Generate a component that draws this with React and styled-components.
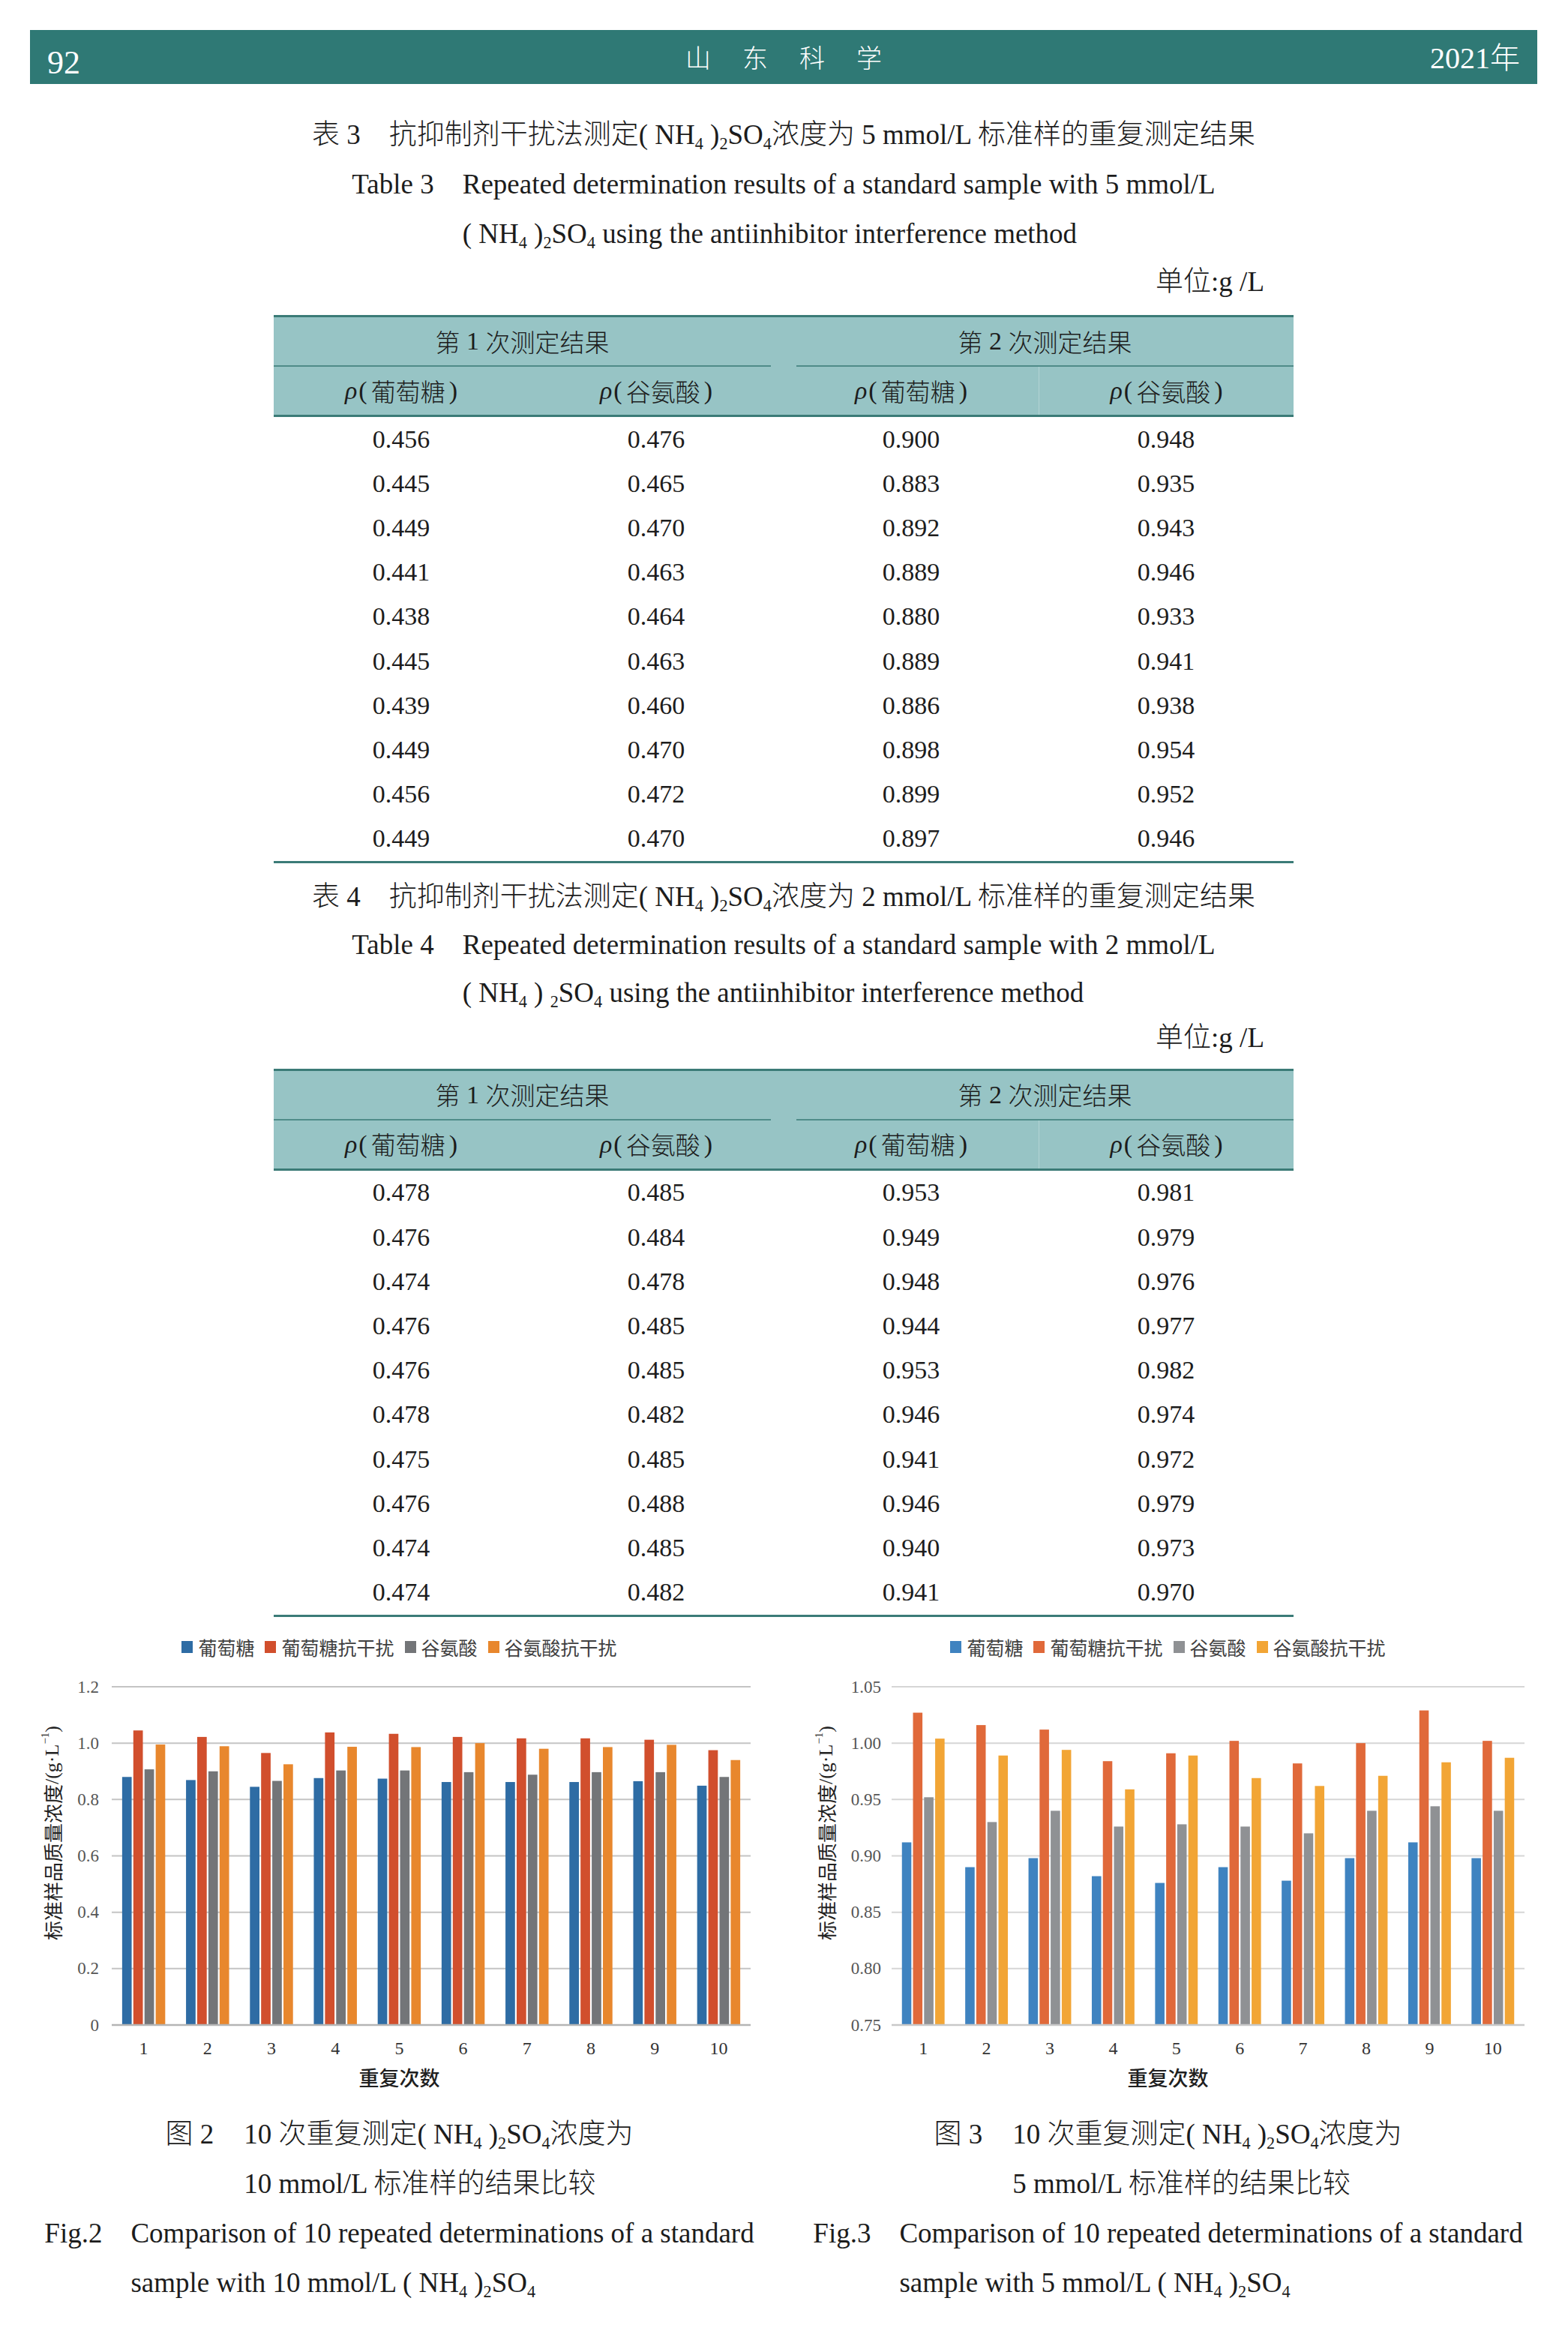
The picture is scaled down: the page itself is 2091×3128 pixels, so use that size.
import React from "react";
import styled, { createGlobalStyle } from "styled-components";

const SERIF = `"Liberation Serif", "Times New Roman", "Noto Sans CJK SC", serif`;
const CJK = `"Noto Sans CJK SC", "Noto Sans CJK TC", sans-serif`;

const GlobalStyle = createGlobalStyle`
  html, body { margin: 0; padding: 0; background: #ffffff; }
  body { font-family: ${SERIF}; color: #1c1c1c; }
  * { box-sizing: border-box; }
`;

const Page = styled.main`
  width: 2091px;
  min-height: 3128px;
  padding: 40px 41px 0 40px;
  overflow: hidden;
  background: #ffffff;
`;

/* ---------- running head ---------- */
const TopBar = styled.header`
  height: 72px;
  background: #2f7975;
  color: #ffffff;
  display: grid;
  grid-template-columns: 1fr auto 1fr;
  align-items: center;
  padding: 0 23px;
`;
const PageNo = styled.span`
  justify-self: start;
  font-size: 44px;
  line-height: 1;
  padding-top: 16px;
`;
const Masthead = styled.span`
  display: flex;
  gap: 42px;
  font-family: ${CJK};
  font-weight: 300;
  font-size: 34px;
  line-height: 1;
`;
const Year = styled.span`
  justify-self: end;
  font-size: 40px;
  line-height: 1;
`;

/* ---------- inline typography ---------- */
const Zh = styled.span`
  font-family: ${CJK};
  font-weight: 300;
  font-size: ${(p) => p.$size || "1em"};
  line-height: 1;
`;
const Sub = styled.sub`
  font-size: 0.6em;
  vertical-align: -0.32em;
  line-height: 0;
`;
const Rho = styled.i`
  font-style: italic;
  font-family: ${SERIF};
`;
const Paren = styled.span`
  margin: ${(p) => (p.$open ? "0 5px 0 2px" : "0 0 0 5px")};
`;

/* ---------- titles & captions ---------- */
const TitleBlock = styled.div`
  margin-top: ${(p) => p.$mt}px;
  font-size: 37px;
  line-height: ${(p) => p.$lh}px;
  white-space: nowrap;
`;
const CenterLine = styled.div`
  text-align: center;
`;
const Hanging = styled.div`
  display: flex;
  justify-content: center;
  margin-top: ${(p) => p.$mt || 0}px;
  font-size: 37px;
  line-height: ${(p) => p.$lh || 66}px;
  white-space: nowrap;
`;
const HangLabel = styled.span`
  margin-right: ${(p) => p.$gap}px;
`;
const HangBody = styled.div`
  display: flex;
  flex-direction: column;
`;
const Gap = styled.span`
  display: inline-block;
  width: ${(p) => p.$w || 38}px;
`;
const Unit = styled.div`
  width: 1360px;
  margin: 0 auto;
  text-align: right;
  padding-right: 39px;
  font-size: 37px;
  line-height: ${(p) => p.$lh}px;
`;

/* ---------- tables ---------- */
const TableWrap = styled.section`
  width: 1360px;
  margin: 13px auto 0;
  border-top: 3px solid #3b7b77;
  border-bottom: 3px solid #3b7b77;
`;
const Head = styled.div`
  display: grid;
  grid-template-columns: repeat(4, 1fr);
  background: #97c4c5;
  border-bottom: 3px solid #3b7b77;
`;
const GroupCell = styled.div`
  grid-column: span 2;
  height: 66px;
  display: flex;
  align-items: center;
  justify-content: center;
  border-bottom: 2px solid #4f8c89;
  margin: ${(p) => (p.$side === "left" ? "0 17px 0 0" : "0 0 0 17px")};
  font-size: 34px;
`;
const ColHead = styled.div`
  height: 64px;
  display: flex;
  align-items: center;
  justify-content: center;
  font-size: 34px;
  border-left: ${(p) => (p.$divider ? "1px solid rgba(255,255,255,0.28)" : "none")};
`;
const Row = styled.div`
  display: grid;
  grid-template-columns: repeat(4, 1fr);
  height: 59.2px;
  align-items: center;
  font-size: 34px;
`;
const Cell = styled.span`
  text-align: center;
`;

/* ---------- figures ---------- */
const Figures = styled.div`
  margin-top: 22px;
  display: grid;
  grid-template-columns: 985px 985px;
  column-gap: 40px;
`;
const Figure = styled.figure`
  margin: 0;
  display: flex;
  flex-direction: column;
`;
const Legend = styled.div`
  height: 36px;
  display: flex;
  justify-content: center;
  align-items: center;
  gap: 14px;
  font-family: ${CJK};
  font-size: 25px;
  color: #3f3f3f;
`;
const LegendItem = styled.span`
  display: inline-flex;
  align-items: center;
  gap: 7px;
`;
const Swatch = styled.i`
  display: block;
  width: 15px;
  height: 16px;
  background: ${(p) => p.$c};
`;
const ChartSvg = styled.svg`
  display: block;
`;
const XTitle = styled.div`
  text-align: center;
  font-family: ${CJK};
  font-weight: 500;
  font-size: 27px;
  line-height: 38px;
  color: #1f1f1f;
`;

/* ---------- data ---------- */
const table3 = [
  ["0.456", "0.476", "0.900", "0.948"],
  ["0.445", "0.465", "0.883", "0.935"],
  ["0.449", "0.470", "0.892", "0.943"],
  ["0.441", "0.463", "0.889", "0.946"],
  ["0.438", "0.464", "0.880", "0.933"],
  ["0.445", "0.463", "0.889", "0.941"],
  ["0.439", "0.460", "0.886", "0.938"],
  ["0.449", "0.470", "0.898", "0.954"],
  ["0.456", "0.472", "0.899", "0.952"],
  ["0.449", "0.470", "0.897", "0.946"],
];
const table4 = [
  ["0.478", "0.485", "0.953", "0.981"],
  ["0.476", "0.484", "0.949", "0.979"],
  ["0.474", "0.478", "0.948", "0.976"],
  ["0.476", "0.485", "0.944", "0.977"],
  ["0.476", "0.485", "0.953", "0.982"],
  ["0.478", "0.482", "0.946", "0.974"],
  ["0.475", "0.485", "0.941", "0.972"],
  ["0.476", "0.488", "0.946", "0.979"],
  ["0.474", "0.485", "0.940", "0.973"],
  ["0.474", "0.482", "0.941", "0.970"],
];

const legendNames = ["葡萄糖", "葡萄糖抗干扰", "谷氨酸", "谷氨酸抗干扰"];

const chart1 = {
  plotLeft: 109,
  plotRight: 961,
  tickRight: 92,
  titleX: 29,
  min: 0,
  max: 1.2,
  ticks: ["0", "0.2", "0.4", "0.6", "0.8", "1.0", "1.2"],
  grid: "#c4c4c4",
  axis: "#b5b5b5",
  colors: ["#2e6ca4", "#d14f2d", "#737578", "#e8872d"],
  series: [
    [0.88, 0.869, 0.845, 0.876, 0.874, 0.862, 0.862, 0.862, 0.865, 0.849],
    [1.045, 1.022, 0.965, 1.038, 1.033, 1.022, 1.017, 1.017, 1.012, 0.975],
    [0.907, 0.9, 0.866, 0.903, 0.903, 0.897, 0.888, 0.897, 0.897, 0.88],
    [0.995, 0.989, 0.925, 0.987, 0.986, 1.0, 0.98, 0.986, 0.994, 0.94],
  ],
};
const chart2 = {
  plotLeft: 124,
  plotRight: 968,
  tickRight: 110,
  titleX: 36,
  min: 0.75,
  max: 1.05,
  ticks: ["0.75", "0.80", "0.85", "0.90", "0.95", "1.00", "1.05"],
  grid: "#d6d6d6",
  axis: "#c8c8c8",
  colors: ["#3f83c0", "#e0693a", "#8f9194", "#f2a535"],
  series: [
    [0.912, 0.89, 0.898, 0.882, 0.876, 0.89, 0.878, 0.898, 0.912, 0.898],
    [1.027, 1.016, 1.012, 0.984, 0.991, 1.002, 0.982, 1.0, 1.029, 1.002],
    [0.952, 0.93, 0.94, 0.926, 0.928, 0.926, 0.92, 0.94, 0.944, 0.94],
    [1.004, 0.989, 0.994, 0.959, 0.989, 0.969, 0.962, 0.971, 0.983, 0.987],
  ],
};

/* ---------- pieces ---------- */
function Formula({ spaced }) {
  return (
    <>
      ( NH<Sub>4</Sub> ){spaced ? " " : ""}
      <Sub>2</Sub>SO<Sub>4</Sub>
    </>
  );
}

function DataTable({ rows }) {
  return (
    <TableWrap>
      <Head>
        <GroupCell $side="left">
          <Zh $size="33px">第</Zh>&nbsp;1&nbsp;<Zh $size="33px">次测定结果</Zh>
        </GroupCell>
        <GroupCell $side="right">
          <Zh $size="33px">第</Zh>&nbsp;2&nbsp;<Zh $size="33px">次测定结果</Zh>
        </GroupCell>
        {[0, 1, 2, 3].map((i) => (
          <ColHead key={i} $divider={i === 3}>
            <Rho>ρ</Rho>
            <Paren $open>(</Paren>
            <Zh $size="33px">{i % 2 === 0 ? "葡萄糖" : "谷氨酸"}</Zh>
            <Paren>)</Paren>
          </ColHead>
        ))}
      </Head>
      {rows.map((r, i) => (
        <Row key={i}>
          {r.map((v, j) => (
            <Cell key={j}>{v}</Cell>
          ))}
        </Row>
      ))}
    </TableWrap>
  );
}

function BarChart({ cfg }) {
  const { plotLeft, plotRight, min, max, ticks, series, colors, grid, axis, tickRight, titleX } = cfg;
  const top = 35;
  const bottom = 486;
  const y = (v) => bottom - ((v - min) / (max - min)) * (bottom - top);
  const cat = (plotRight - plotLeft) / 10;
  const group = cat * 0.7;
  const pitch = group / 4;
  const bw = pitch - 2.2;
  return (
    <ChartSvg width={985} height={537} viewBox="0 0 985 537">
      {ticks.map((t) => (
        <g key={t}>
          {+t !== min && (
            <line x1={plotLeft} x2={plotRight} y1={y(+t)} y2={y(+t)} stroke={grid} strokeWidth={2} />
          )}
          <text
            x={tickRight}
            y={y(+t)}
            textAnchor="end"
            dominantBaseline="central"
            fontFamily={SERIF}
            fontSize={23}
            fill="#555555"
          >
            {t}
          </text>
        </g>
      ))}
      {series[0].map((_, i) => {
        const gx = plotLeft + i * cat + (cat - group) / 2;
        return (
          <g key={i}>
            {series.map((s, k) => (
              <rect
                key={k}
                x={gx + k * pitch + 1.1}
                y={y(s[i])}
                width={bw}
                height={bottom - y(s[i])}
                fill={colors[k]}
              />
            ))}
            <text
              x={plotLeft + i * cat + cat / 2}
              y={517}
              textAnchor="middle"
              dominantBaseline="central"
              fontFamily={SERIF}
              fontSize={24}
              fill="#333333"
            >
              {i + 1}
            </text>
          </g>
        );
      })}
      <line x1={plotLeft} x2={plotRight} y1={bottom} y2={bottom} stroke={axis} strokeWidth={2.5} />
      <text
        transform={`translate(${titleX} 230) rotate(-90)`}
        textAnchor="middle"
        dominantBaseline="central"
        fontSize={26}
        fill="#222222"
      >
        <tspan fontFamily={CJK}>标准样品质量浓度</tspan>
        <tspan fontFamily={SERIF}>/(g·L</tspan>
        <tspan fontFamily={SERIF} fontSize={15} dy={-9}>
          −1
        </tspan>
        <tspan fontFamily={SERIF} dy={9}>
          )
        </tspan>
      </text>
    </ChartSvg>
  );
}

function ChartFigure({ cfg, num, conc }) {
  return (
    <Figure>
      <Legend>
        {legendNames.map((n, i) => (
          <LegendItem key={n}>
            <Swatch $c={cfg.colors[i]} />
            {n}
          </LegendItem>
        ))}
      </Legend>
      <BarChart cfg={cfg} />
      <XTitle>重复次数</XTitle>
      <Hanging $mt={24}>
        <HangLabel $gap={40}>
          <Zh>图</Zh> {num}
        </HangLabel>
        <HangBody>
          <span>
            10 <Zh>次重复测定</Zh>
            <Formula />
            <Zh>浓度为</Zh>
          </span>
          <span>
            {conc} mmol/L <Zh>标准样的结果比较</Zh>
          </span>
        </HangBody>
      </Hanging>
      <Hanging>
        <HangLabel $gap={38}>Fig.{num}</HangLabel>
        <HangBody>
          <span>Comparison of 10 repeated determinations of a standard</span>
          <span>
            sample with {conc} mmol/L <Formula />
          </span>
        </HangBody>
      </Hanging>
    </Figure>
  );
}

function TableTitle({ num, conc, mt, lh, unitLh, spaced }) {
  return (
    <>
      <TitleBlock $mt={mt} $lh={lh}>
        <CenterLine>
          <Zh>表</Zh> {num}
          <Gap />
          <Zh>抗抑制剂干扰法测定</Zh>
          <Formula />
          <Zh>浓度为</Zh> {conc} mmol/L <Zh>标准样的重复测定结果</Zh>
        </CenterLine>
        <Hanging $lh={lh}>
          <HangLabel $gap={38}>Table {num}</HangLabel>
          <HangBody>
            <span>Repeated determination results of a standard sample with {conc} mmol/L</span>
            <span>
              <Formula spaced={spaced} /> using the antiinhibitor interference method
            </span>
          </HangBody>
        </Hanging>
      </TitleBlock>
      <Unit $lh={unitLh}>
        <Zh>单位</Zh>:g /L
      </Unit>
    </>
  );
}

export default function App() {
  return (
    <>
      <GlobalStyle />
      <Page>
        <TopBar>
          <PageNo>92</PageNo>
          <Masthead>
            <span>山</span>
            <span>东</span>
            <span>科</span>
            <span>学</span>
          </Masthead>
          <Year>
            2021<Zh $size="40px">年</Zh>
          </Year>
        </TopBar>

        <TableTitle num={3} conc={5} mt={35} lh={66} unitLh={62} />
        <DataTable rows={table3} />

        <TableTitle num={4} conc={2} mt={13} lh={64} unitLh={56} spaced />
        <DataTable rows={table4} />

        <Figures>
          <ChartFigure cfg={chart1} num={2} conc={10} />
          <ChartFigure cfg={chart2} num={3} conc={5} />
        </Figures>
      </Page>
    </>
  );
}
